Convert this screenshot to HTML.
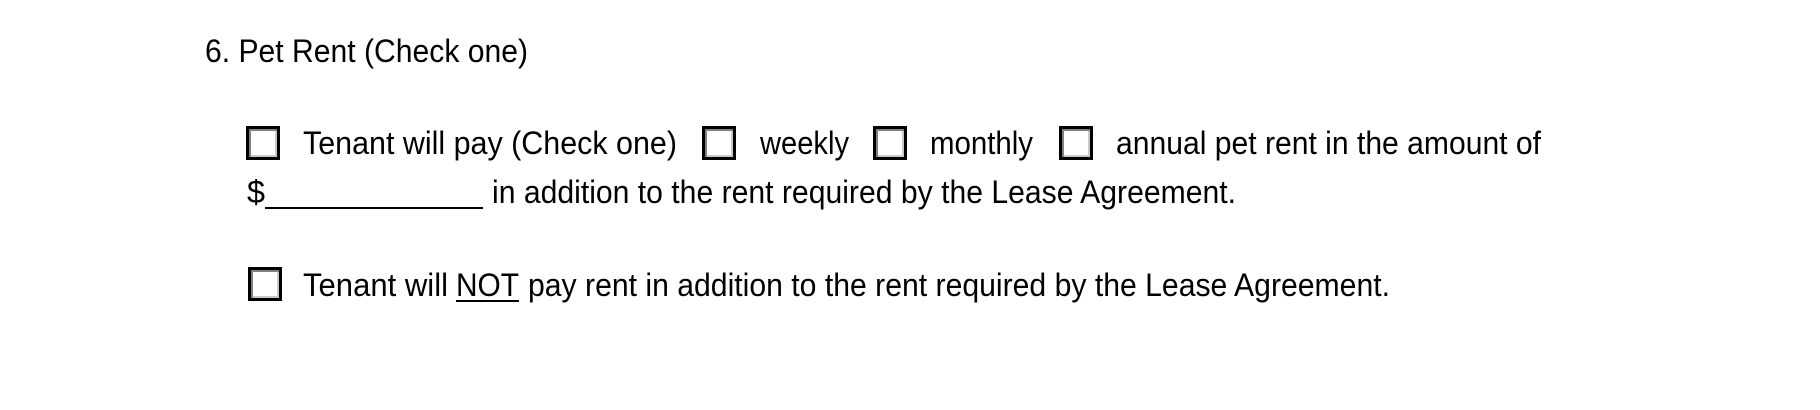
<!DOCTYPE html>
<html><head><meta charset="utf-8"><style>
html,body{margin:0;padding:0;background:#fff;width:1820px;height:410px;overflow:hidden}
svg{display:block}
text{font-family:"Liberation Sans",Arial,sans-serif;font-size:32px;fill:#000}
</style></head><body>
<svg width="1820" height="410" viewBox="0 0 1820 410" xmlns="http://www.w3.org/2000/svg">
<defs>
<g id="cb">
<rect x="0" y="0" width="34" height="34" fill="#000"/>
<rect x="3" y="3" width="28" height="28" fill="#808080"/>
<rect x="5" y="5" width="26" height="26" fill="#c8c8c8"/>
<rect x="5" y="5" width="24" height="24" fill="#fff"/>
</g>
</defs>
<text x="205" y="62" textLength="323" lengthAdjust="spacingAndGlyphs">6. Pet Rent (Check one)</text>

<use href="#cb" x="246" y="126"/>
<text x="303" y="154" textLength="374" lengthAdjust="spacingAndGlyphs">Tenant will pay (Check one)</text>
<use href="#cb" x="702" y="126"/>
<text x="760" y="154" textLength="89" lengthAdjust="spacingAndGlyphs">weekly</text>
<use href="#cb" x="873" y="126"/>
<text x="930" y="154" textLength="103" lengthAdjust="spacingAndGlyphs">monthly</text>
<use href="#cb" x="1059" y="126"/>
<text x="1116" y="154" textLength="425" lengthAdjust="spacingAndGlyphs">annual pet rent in the amount of</text>

<text x="247" y="203" textLength="18" lengthAdjust="spacingAndGlyphs">$</text>
<rect x="265" y="207" width="218" height="2" fill="#000"/>
<text x="492" y="203" textLength="744" lengthAdjust="spacingAndGlyphs">in addition to the rent required by the Lease Agreement.</text>

<use href="#cb" x="248" y="267"/>
<text x="303" y="296" textLength="145" lengthAdjust="spacingAndGlyphs">Tenant will</text>
<text x="456" y="296" textLength="63" lengthAdjust="spacingAndGlyphs">NOT</text>
<rect x="456" y="300" width="63" height="2" fill="#000"/>
<text x="528" y="296" textLength="862" lengthAdjust="spacingAndGlyphs">pay rent in addition to the rent required by the Lease Agreement.</text>
</svg>
</body></html>
